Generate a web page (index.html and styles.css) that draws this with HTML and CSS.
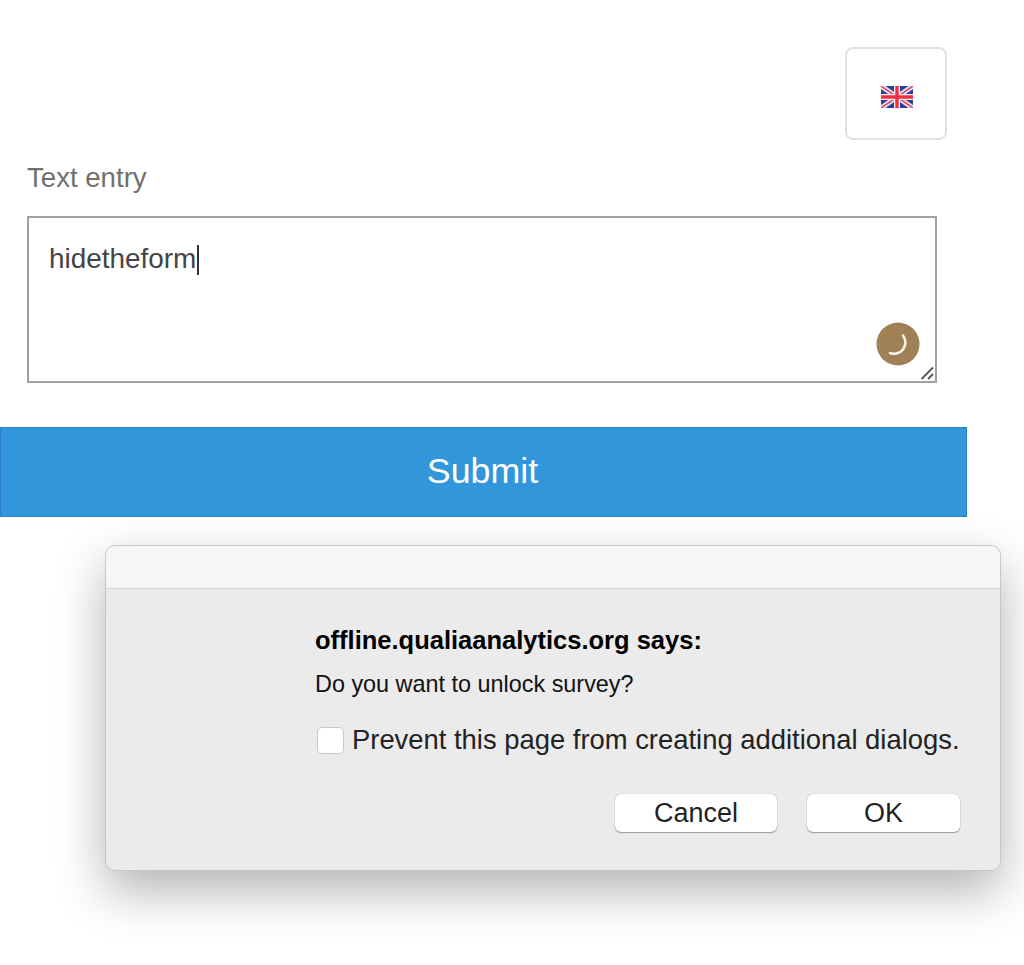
FILE: index.html
```html
<!DOCTYPE html>
<html lang="en">
<head>
    <meta charset="UTF-8">
    <title>Text entry</title>
    <link rel="stylesheet" href="styles.css">
</head>
<body>
    <div class="lang-row">
        <div class="lang-button">
            <svg class="flag" width="32" height="22" viewBox="0 0 32 22">
                <rect width="32" height="22" fill="#2b3f9a"/>
                <path d="M0 0L32 22M32 0L0 22" stroke="#e6e6f2" stroke-width="5"/>
                <path d="M0 0L32 22M32 0L0 22" stroke="#e8485f" stroke-width="1.6"/>
                <path d="M16 0V22M0 11H32" stroke="#f4eef2" stroke-width="6"/>
                <path d="M16 0V22M0 11H32" stroke="#f0303f" stroke-width="3.4"/>
            </svg>
        </div>
    </div>

    <div class="label">Text entry</div>
    <div class="text-entry">
        <span class="typed">hidetheform</span><span class="caret"></span>
        <div class="spinner">
            <svg width="44" height="44" viewBox="0 0 44 44">
                <circle cx="22" cy="22" r="21.5" fill="#a08055"/>
                <path d="M27 13.5A11.3 11.3 0 0 1 14 31" fill="none" stroke="#f6f1ea" stroke-width="2.6" stroke-linecap="round"/>
            </svg>
        </div>
        <svg class="grip" width="14" height="14" viewBox="0 0 14 14">
            <path d="M1.5 13L13 1.5M8 13L13 8" stroke="#555" stroke-width="1.8"/>
        </svg>
    </div>

    <button class="submit">Submit</button>

    <div class="dialog">
        <div class="dialog-top"></div>
        <div class="dialog-body">
            <div class="dialog-title">offline.qualiaanalytics.org says:</div>
            <div class="dialog-msg">Do you want to unlock survey?</div>
            <div class="dialog-check">
                <span class="checkbox"></span>
                <span>Prevent this page from creating additional dialogs.</span>
            </div>
            <div class="dialog-buttons">
                <button class="dialog-btn cancel">Cancel</button>
                <button class="dialog-btn ok">OK</button>
            </div>
        </div>
    </div>
</body>
</html>
```
FILE: styles.css
```css
html, body {
    height: 100%;
}
body {
    margin: 0;
    background: #fff;
    font-family: "Liberation Sans", Arial, sans-serif;
    overflow: hidden;
}
.lang-row {
    display: flex;
    justify-content: flex-end;
    width: 947px;
    padding-top: 47px;
}
.lang-button {
    width: 102px;
    height: 93px;
    box-sizing: border-box;
    border: 2px solid #e2e2e2;
    border-radius: 8px;
    display: flex;
    align-items: center;
    justify-content: center;
    padding-top: 6px;
    padding-left: 1px;
}
.flag {
    filter: blur(0.7px);
}
.label {
    margin: 22px 0 0 27px;
    font-size: 27.6px;
    line-height: 32px;
    color: #707070;
}
.text-entry {
    position: relative;
    box-sizing: border-box;
    width: 910px;
    height: 167px;
    margin: 22px 0 0 27px;
    padding: 23px 20px;
    border: 2px solid #a0a0a0;
    font-size: 27.9px;
    line-height: 36px;
    color: #444;
}
.caret {
    display: inline-block;
    width: 2px;
    height: 30px;
    margin-left: 1px;
    background: #333;
    vertical-align: -7px;
}
.spinner {
    position: absolute;
    right: 15px;
    bottom: 15px;
    width: 44px;
    height: 44px;
}
.spinner svg, .grip {
    display: block;
}
.grip {
    position: absolute;
    right: 1px;
    bottom: 1px;
}
.submit {
    display: block;
    box-sizing: border-box;
    width: 967px;
    height: 90px;
    margin-top: 44px;
    padding: 0 2px 1px 0;
    border: 1px solid #2f7fd8;
    background: #3296db;
    color: #fff;
    font-family: inherit;
    font-size: 35.8px;
}
.dialog {
    box-sizing: border-box;
    width: 896px;
    height: 326px;
    margin: 28px 0 0 105px;
    border: 1px solid #c6c6c6;
    border-radius: 10px;
    background: #ebebeb;
    box-shadow: 0 20px 50px rgba(0, 0, 0, 0.3);
    overflow: hidden;
}
.dialog-top {
    height: 42px;
    background: #f6f6f6;
    border-bottom: 1px solid #d4d4d4;
}
.dialog-body {
    padding: 37px 40px 0 209px;
}
.dialog-title {
    font-size: 25.5px;
    line-height: 28px;
    font-weight: bold;
    color: #000;
}
.dialog-msg {
    margin-top: 17px;
    font-size: 23.4px;
    line-height: 26px;
    color: #111;
}
.dialog-check {
    display: flex;
    align-items: center;
    gap: 8px;
    margin-top: 28px;
    padding-left: 2px;
    font-size: 27.4px;
    line-height: 30px;
    color: #222;
    white-space: nowrap;
}
.checkbox {
    width: 27px;
    height: 27px;
    box-sizing: border-box;
    background: #fff;
    border: 1px solid #c8c8c8;
    border-radius: 5px;
}
.dialog-buttons {
    display: flex;
    justify-content: flex-end;
    gap: 30px;
    margin-top: 39px;
}
.dialog-btn {
    height: 38px;
    padding: 0;
    background: #fff;
    border: none;
    border-radius: 6px;
    box-shadow: 0 0 1px rgba(0, 0, 0, 0.4), 0 1px 1px rgba(0, 0, 0, 0.3);
    font-family: inherit;
    font-size: 27px;
    color: #222;
}
.cancel {
    width: 162px;
}
.ok {
    width: 153px;
}
```
